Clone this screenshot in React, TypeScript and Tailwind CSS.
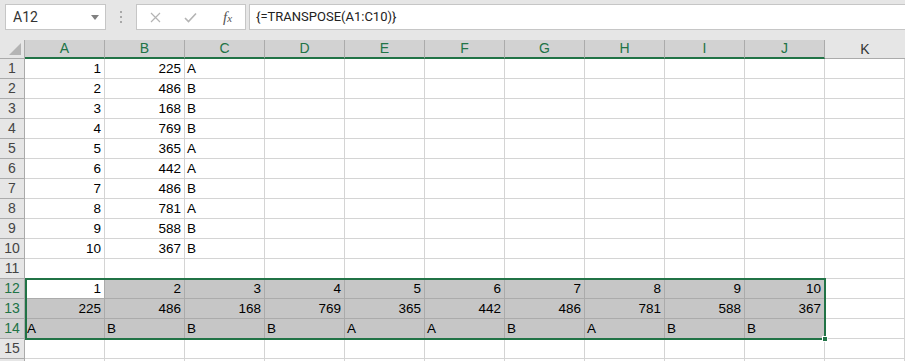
import React from 'react';

const cols = ['A', 'B', 'C', 'D', 'E', 'F', 'G', 'H', 'I', 'J', 'K'];
const values = [225, 486, 168, 769, 365, 442, 486, 781, 588, 367];
const groups = ['A', 'B', 'B', 'B', 'A', 'A', 'B', 'A', 'B', 'B'];

type Cell = { text: string; num?: boolean };

const buildRow = (r: number): Cell[] => {
  const cells: Cell[] = cols.map(() => ({ text: '' }));
  if (r <= 10) {
    cells[0] = { text: String(r), num: true };
    cells[1] = { text: String(values[r - 1]), num: true };
    cells[2] = { text: groups[r - 1] };
  } else if (r === 12) {
    for (let i = 0; i < 10; i++) cells[i] = { text: String(i + 1), num: true };
  } else if (r === 13) {
    for (let i = 0; i < 10; i++) cells[i] = { text: String(values[i]), num: true };
  } else if (r === 14) {
    for (let i = 0; i < 10; i++) cells[i] = { text: groups[i] };
  }
  return cells;
};

const rows = Array.from({ length: 15 }, (_, i) => i + 1);

const App: React.FC = () => {
  return (
    <div className="relative w-[905px] h-[361px] overflow-hidden bg-white font-['Liberation_Sans',Arial,sans-serif] text-[#222]">
      {/* formula bar */}
      <div className="flex h-[40px] bg-[#e6e6e6] pt-[4px]">
        <div className="ml-[5px] flex h-[26px] w-[101px] items-center justify-between border border-[#c6c6c6] bg-white pl-[7px] pr-[6px]">
          <span className="font-['Roboto',sans-serif] text-[14px] text-[#333]">A12</span>
          <svg width="8" height="5" viewBox="0 0 8 5">
            <path d="M0 0 L8 0 L4 5 Z" fill="#808080" />
          </svg>
        </div>
        <div className="ml-[14px] mr-[14px] flex h-[26px] flex-col items-center justify-center gap-[3px]">
          <span className="block h-[2px] w-[2px] bg-[#a8a8a8]" />
          <span className="block h-[2px] w-[2px] bg-[#a8a8a8]" />
          <span className="block h-[2px] w-[2px] bg-[#a8a8a8]" />
        </div>
        <div className="flex h-[26px] w-[110px] items-center border border-[#c6c6c6] bg-white">
          <svg className="ml-[13px]" width="11" height="11" viewBox="0 0 11 11">
            <path d="M1 1 L10 10 M10 1 L1 10" stroke="#b4b4b4" strokeWidth="1.2" fill="none" />
          </svg>
          <svg className="ml-[23px]" width="13" height="11" viewBox="0 0 13 11">
            <path d="M1 6 L4.5 9.5 L12 1.5" stroke="#b4b4b4" strokeWidth="1.6" fill="none" />
          </svg>
          <span className="ml-[26px] font-['Liberation_Serif',serif] text-[15px] italic text-[#555]">
            f<span className="text-[11px]">x</span>
          </span>
        </div>
        <div className="ml-[3px] flex h-[26px] flex-1 items-center border-y border-l border-[#c6c6c6] bg-white pl-[6px]">
          <span className="font-['Roboto',sans-serif] text-[13px] text-[#222]">{'{=TRANSPOSE(A1:C10)}'}</span>
        </div>
      </div>

      {/* column headers */}
      <div className="flex h-[19px]">
        <div className="relative w-[25px] border-r border-b border-[#ababab] bg-[#e6e6e6]">
          <svg className="absolute right-[3px] bottom-[3px]" width="12" height="12" viewBox="0 0 12 12">
            <path d="M12 0 L12 12 L0 12 Z" fill="#b4b4b4" />
          </svg>
        </div>
        {cols.map((c, i) =>
          i < 10 ? (
            <div
              key={c}
              className="flex w-[80px] items-center justify-center border-r border-b-2 border-r-[#ababab] border-b-[#217346] bg-[#d2d2d2] text-[14px] text-[#217346]"
            >
              {c}
            </div>
          ) : (
            <div
              key={c}
              className="flex w-[80px] items-center justify-center border-b border-[#ababab] bg-[#e6e6e6] text-[14px] text-[#333]"
            >
              {c}
            </div>
          )
        )}
      </div>

      {/* grid rows */}
      {rows.map((r) => {
        const sel = r >= 12 && r <= 14;
        const cells = buildRow(r);
        return (
          <div key={r} className="flex h-[20px]">
            <div
              className={`flex w-[25px] items-center justify-center border-r border-b border-[#ababab] text-[14px] ${
                sel ? 'bg-[#d2d2d2] text-[#217346]' : 'bg-[#e6e6e6] text-[#444]'
              }`}
            >
              {r}
            </div>
            {cells.map((cell, i) => {
              const inSel = sel && i < 10;
              const active = r === 12 && i === 0;
              const bg = inSel && !active ? 'bg-[#c6c6c6]' : 'bg-white';
              const line = inSel ? 'border-[#ababab]' : 'border-[#d4d4d4]';
              return (
                <div
                  key={i}
                  className={`flex w-[80px] items-end overflow-hidden whitespace-nowrap border-r border-b pb-[1px] text-[13.5px] leading-[16px] text-black ${bg} ${line} ${
                    cell.num ? 'justify-end pr-[3px]' : 'justify-start pl-[2px]'
                  }`}
                >
                  {cell.text}
                </div>
              );
            })}
          </div>
        );
      })}
      <div className="flex h-[2px]">
        <div className="w-[25px] border-r border-[#ababab] bg-[#e6e6e6]" />
        {cols.map((c) => (
          <div key={c} className="w-[80px] border-r border-[#d4d4d4]" />
        ))}
      </div>

      {/* selection outline */}
      <div className="pointer-events-none absolute left-[25px] top-[278px] h-[62px] w-[801px] border-2 border-[#217346]" />
      <div className="absolute left-[822px] top-[336px] h-[6px] w-[6px] border border-white bg-[#217346]" />
    </div>
  );
};

export default App;
